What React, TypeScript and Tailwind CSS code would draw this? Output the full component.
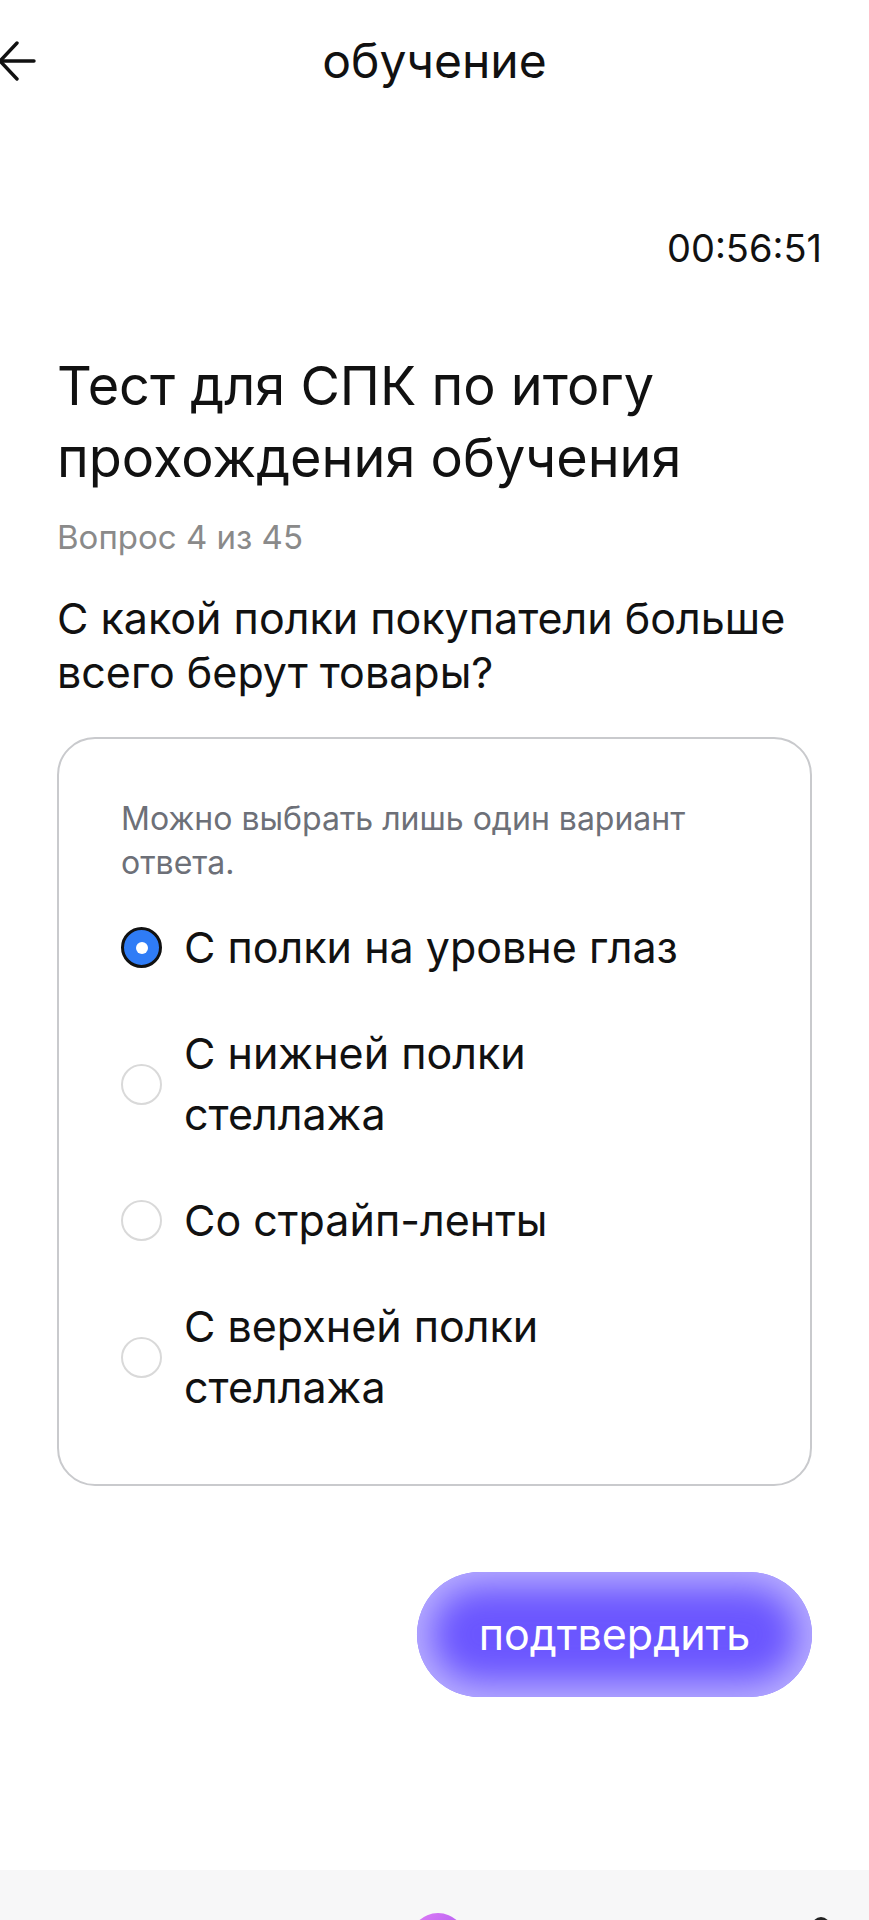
import React, { useState } from "react"

const options = [
  "С полки на уровне глаз",
  "С нижней полки стеллажа",
  "Со страйп-ленты",
  "С верхней полки стеллажа",
]

function Radio({ checked }: { checked: boolean }) {
  if (checked) {
    return (
      <span className="flex h-[41px] w-[41px] shrink-0 items-center justify-center rounded-full border-[3px] border-[#111] bg-[#2f7cf6]">
        <span className="h-[12px] w-[12px] rounded-full bg-white" />
      </span>
    )
  }
  return <span className="h-[41px] w-[41px] shrink-0 rounded-full border-2 border-[#d9d9d9] bg-white" />
}

export default function App() {
  const [selected, setSelected] = useState(0)

  return (
    <div
      className="flex min-h-[1920px] w-full flex-col bg-white text-[#111]"
      style={{ fontFamily: "Inter, 'Noto Sans', sans-serif" }}
    >
      <header className="relative flex h-[122px] items-center justify-center">
        <svg
          className="absolute left-0 top-[41px]"
          width="36"
          height="40"
          viewBox="0 0 36 40"
          fill="none"
          stroke="#111"
          strokeWidth="3.4"
          strokeLinecap="round"
          strokeLinejoin="round"
        >
          <path d="M34 20H1" />
          <path d="M17 2L0 20l17 18" />
        </svg>
        <h1 className="text-[48px] font-normal leading-none">обучение</h1>
      </header>

      <div className="mt-[106px] pr-[47px] text-right text-[38px] leading-[40px]">00:56:51</div>

      <main className="px-[57px]">
        <h2 className="mt-[82px] text-[54px] font-normal leading-[72px]">
          Тест для СПК по итогу прохождения обучения
        </h2>
        <p className="mt-[23px] text-[33px] leading-[40px] text-[#8a8a8a]">Вопрос 4 из 45</p>
        <p className="mt-[34px] text-[43px] leading-[54px]">
          С какой полки покупатели больше всего берут товары?
        </p>

        <section className="mt-[38px] rounded-[38px] border-2 border-[#c9cacd] px-[62px] pb-[66px] pt-[58px]">
          <p className="text-[32px] leading-[44px] text-[#6d7078]">
            Можно выбрать лишь один вариант ответа.
          </p>
          <div className="mt-[32px] flex flex-col gap-[45px]">
            {options.map((opt, i) => (
              <button
                key={opt}
                type="button"
                onClick={() => setSelected(i)}
                className="flex items-center gap-[22px] text-left"
              >
                <Radio checked={selected === i} />
                <span className="max-w-[520px] text-[43px] leading-[61px]">{opt}</span>
              </button>
            ))}
          </div>
        </section>

        <div className="mt-[86px] flex justify-end">
          <button
            type="button"
            className="h-[125px] w-[395px] rounded-full bg-[#6b56ff] text-[43px] text-white shadow-[inset_0_0_34px_14px_rgba(190,180,255,0.95)]"
          >
            подтвердить
          </button>
        </div>
      </main>

      <footer className="relative mt-auto h-[50px] overflow-hidden bg-[#f7f7f8]">
        <span className="absolute left-[410px] top-[43px] h-[56px] w-[56px] rounded-full bg-gradient-to-br from-[#e27cf5] to-[#9a4cf0]" />
        <span className="absolute left-[812px] top-[47px] h-[10px] w-[18px] rounded-t-full bg-[#222]" />
      </footer>
    </div>
  )
}
